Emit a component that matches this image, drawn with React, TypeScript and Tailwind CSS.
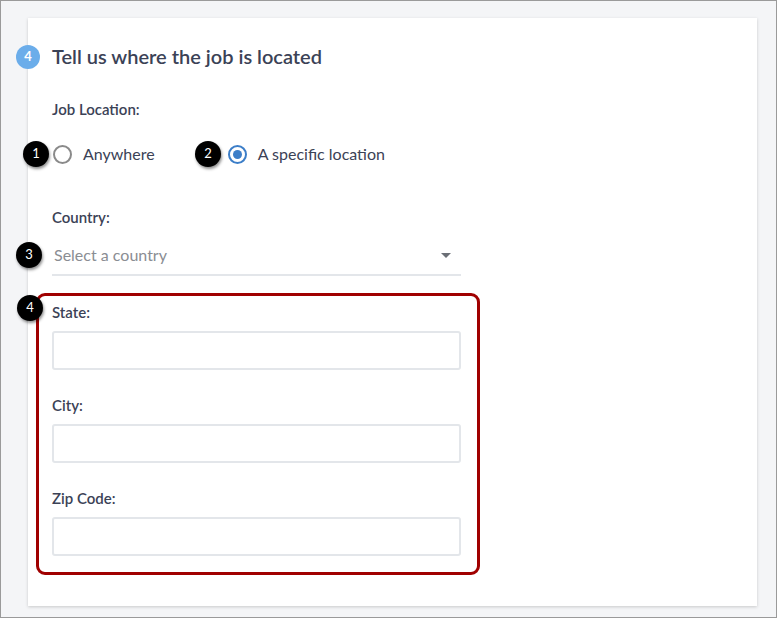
const Badge = ({ n, className }: { n: string; className: string }) => (
  <div
    className={`absolute z-10 w-[26px] h-[26px] rounded-full bg-black text-white text-[13px] flex items-center justify-center shadow-[1px_2px_3px_rgba(0,0,0,0.45)] ${className}`}
  >
    {n}
  </div>
);

const Field = ({ label, className = "" }: { label: string; className?: string }) => (
  <div className={className}>
    <div className="text-[15px] font-semibold text-[#3b4256] leading-[18px]">{label}</div>
    <div className="mt-[10px] w-[409px] h-[39px] bg-white border-2 border-[#e3e6ea] rounded-[3px]" />
  </div>
);

export default function App() {
  return (
    <div
      className="w-[777px] h-[618px] border border-[#9a9a9a] bg-[#f4f5f7] pt-[17px] pl-[27px] pr-[19px]"
      style={{ fontFamily: "Lato, 'Liberation Sans', sans-serif" }}
    >
      <div className="relative bg-white h-[588px] shadow-[0_1px_3px_rgba(0,0,0,0.18)] pl-[24px] pt-[26px]">
        <div className="absolute left-[-12px] top-[27px] w-[24px] h-[24px] rounded-full bg-[#6badea] text-white text-[13px] font-bold flex items-center justify-center">
          4
        </div>
        <h1 className="text-[20px] font-semibold text-[#3b4256] leading-[24px]">Tell us where the job is located</h1>

        <div className="mt-[32px] text-[15px] font-semibold text-[#3b4256] leading-[18px]">Job Location:</div>

        <div className="relative mt-[25px] flex items-center h-[22px] text-[16px] text-[#3b4256]">
          <Badge n="1" className="left-[-29px] top-[-2px]" />
          <span className="ml-[1px] w-[19px] h-[19px] rounded-full border-2 border-[#8a8a8a] bg-white" />
          <span className="ml-[11px]">Anywhere</span>
          <Badge n="2" className="left-[143px] top-[-2px]" />
          <span className="ml-[73px] w-[19px] h-[19px] rounded-full border-2 border-[#3c7ec8] bg-white flex items-center justify-center">
            <span className="w-[9px] h-[9px] rounded-full bg-[#3c7ec8]" />
          </span>
          <span className="ml-[11px]">A specific location</span>
        </div>

        <div className="mt-[43px] text-[15px] font-semibold text-[#3b4256] leading-[18px]">Country:</div>

        <div className="relative mt-[10px] w-[409px] h-[40px] border-b-2 border-[#e3e6ea] flex items-center justify-between pr-[10px]">
          <Badge n="3" className="left-[-36px] top-[6px]" />
          <span className="ml-[2px] text-[16px] text-[#8a8d93]">Select a country</span>
          <span className="w-0 h-0 border-l-[5px] border-r-[5px] border-t-[5px] border-l-transparent border-r-transparent border-t-[#6b6f76]" />
        </div>

        <div className="relative mt-[17px] ml-[-16px] w-[444px] h-[282px] border-[3px] border-[#a00000] rounded-[9px] pl-[13px] pt-[7px]">
          <Badge n="4" className="left-[-22px] top-[-1px]" />
          <Field label="State:" />
          <Field label="City:" className="mt-[26px]" />
          <Field label="Zip Code:" className="mt-[26px]" />
        </div>
      </div>
    </div>
  );
}
